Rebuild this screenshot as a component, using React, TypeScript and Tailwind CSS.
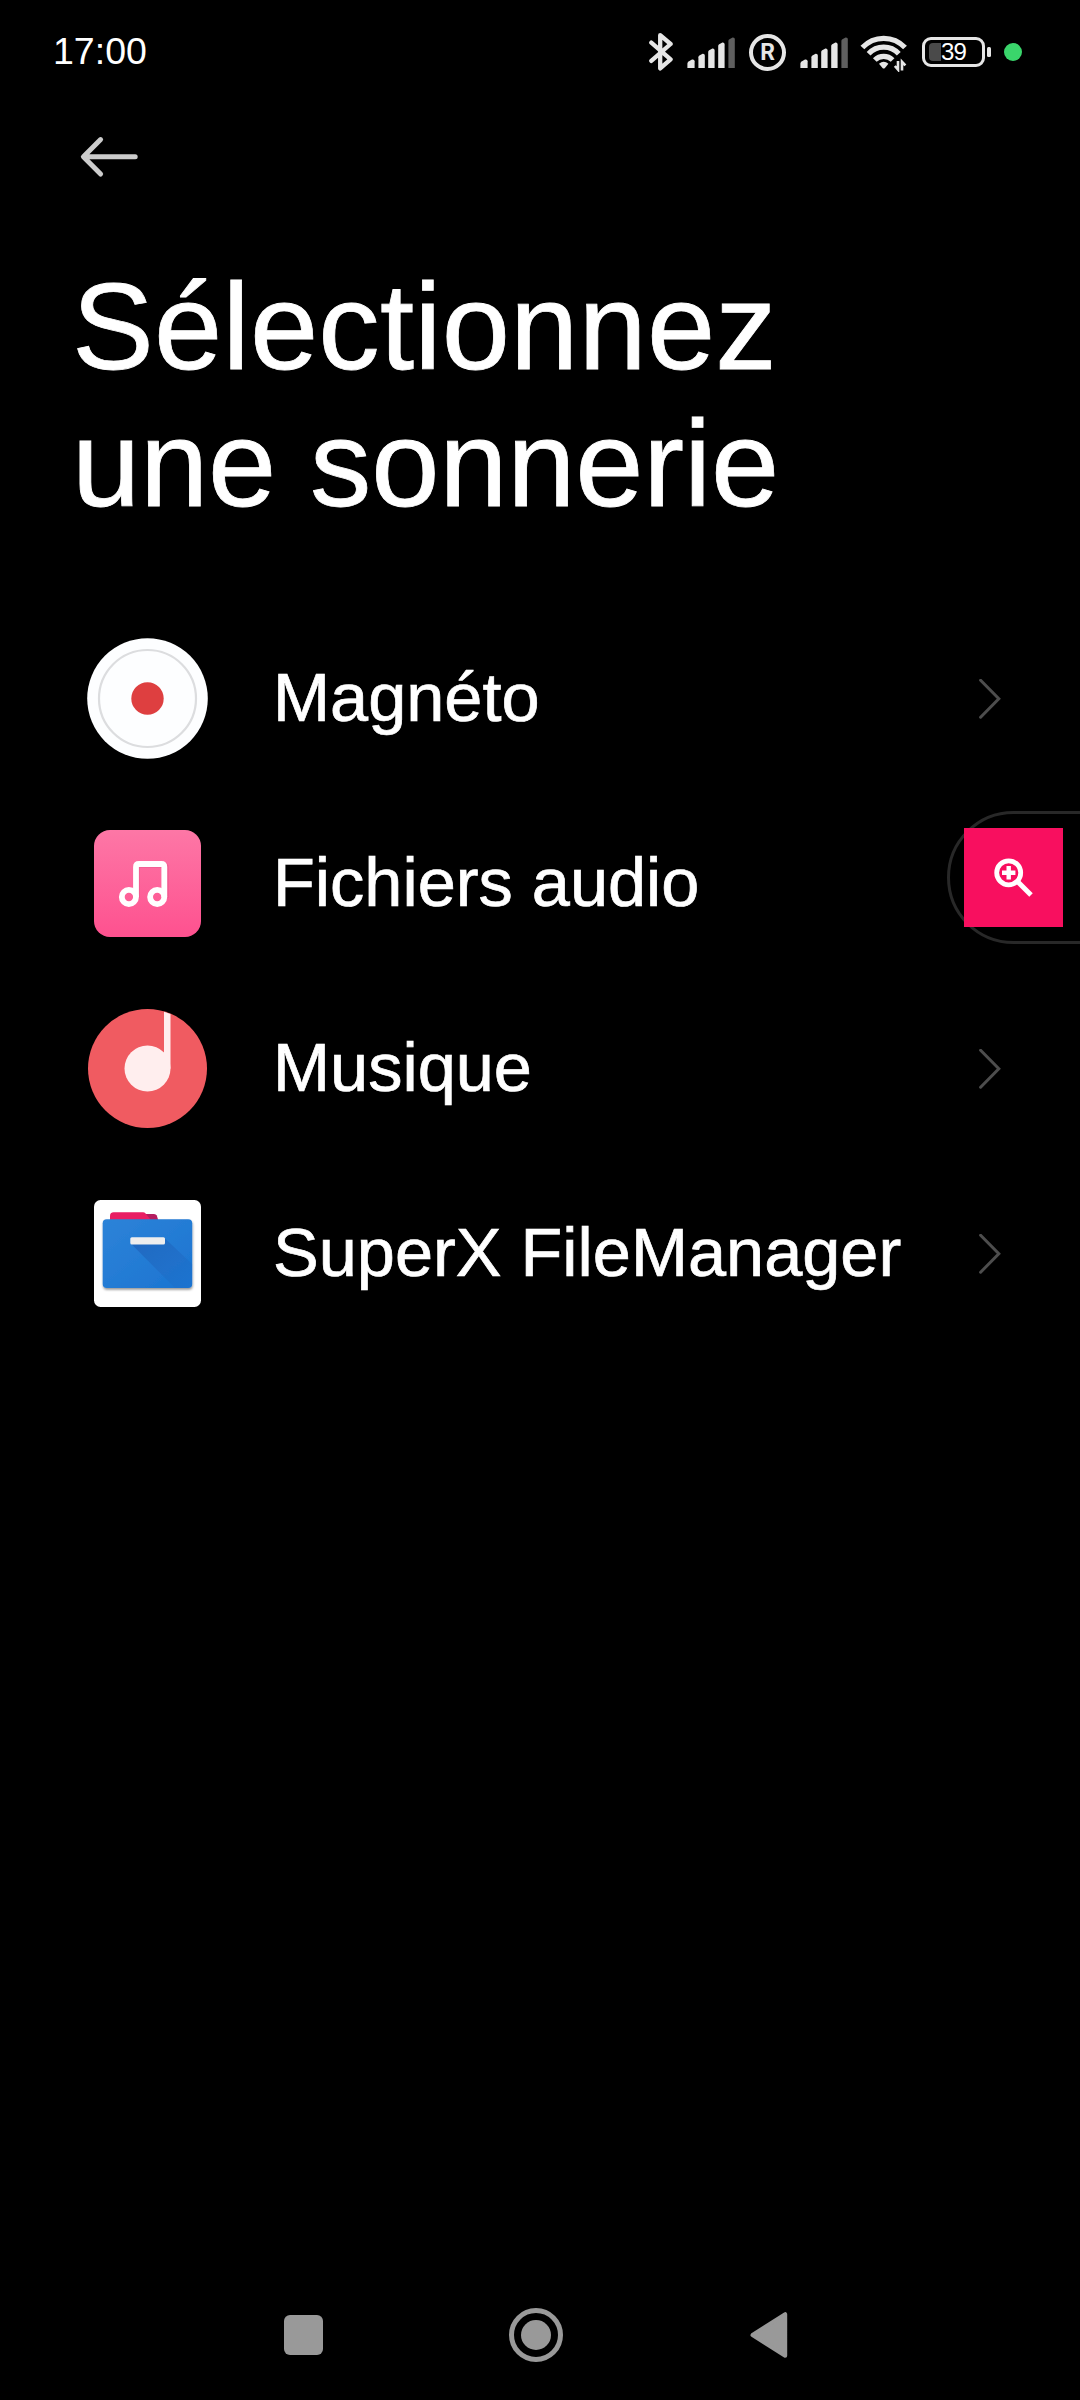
import type { ReactNode } from 'react';

function Signal() {
  return (
    <svg className="h-10 w-12" viewBox="0 0 48 40" fill="#e6e6e6">
      <path d="M0.4 36v-4.2q0-1.4 1.2-2.2l3.4-2q2.6-0.4 2.6 1.6V36z" />
      <path d="M11.4 36V25.2q0-1.2 1-1.8l3.2-1.6q2.2-0.2 2.2 1.6V36z" />
      <path d="M21.2 36V20q0-1.2 1-1.8l3.2-1.6q2.2-0.2 2.2 1.6V36z" />
      <path d="M31.2 36V14q0-1.2 1-1.8l3.2-1.6q2.2-0.2 2.2 1.6V36z" />
      <path d="M41.4 36V9q0-1.2 1-1.8l3.2-1.8q2.2-0.2 2.2 1.6V36z" fill="#5f5f5f" />
    </svg>
  );
}

function StatusBar() {
  return (
    <header className="flex h-[104px] items-center pl-[53px] pr-[58px]">
      <span className="grow text-[37.5px] leading-none">17:00</span>

      <svg className="h-10 w-6" viewBox="0 0 24 40" fill="none" stroke="#e6e6e6" strokeWidth="4.3" strokeLinecap="round" strokeLinejoin="round">
        <path d="M2.3 10.6L21.6 27.3L11.2 36.4V3.2L21.6 12L2.3 28.9" />
      </svg>
      <div className="ml-3.5"><Signal /></div>
      <div className="ml-3.5 flex size-[37px] items-center justify-center rounded-full border-4 border-[#e6e6e6] font-['Roboto',sans-serif] text-[23px] font-bold leading-none text-[#e6e6e6]">R</div>
      <div className="ml-3.5"><Signal /></div>

      <svg className="ml-3 h-10 w-12" viewBox="0 0 48 40" fill="none" stroke="#e6e6e6" strokeWidth="5.2">
        <path d="M2.4 15.6A29 29 0 0 1 45 15.6" />
        <path d="M8.6 21.8A20.5 20.5 0 0 1 38.8 21.8" />
        <path d="M14.8 28A12.6 12.6 0 0 1 32.6 28" />
        <path d="M19 31.8Q23.7 27.8 28.4 31.8L24.9 36Q23.7 37.2 22.5 36z" fill="#e6e6e6" stroke="none" />
        <path d="M38 29v8.6L34.8 34M42 38.4V29.8L45.4 33.4" strokeWidth="2.6" />
      </svg>

      <div className="ml-3.5 flex items-center">
        <div className="relative flex h-[30px] w-[63px] items-center justify-center rounded-[9px] border-[3px] border-[#e6e6e6]">
          <div className="absolute left-1 top-[3px] h-[18px] w-3 rounded-l-[4px] bg-[#4a4a4a]" />
          <span className="relative text-[24px] leading-none tracking-[-0.8px]">39</span>
        </div>
        <div className="ml-0.5 h-2.5 w-1 rounded-[1.5px] bg-[#e6e6e6]" />
      </div>
      <div className="ml-[13px] size-[18px] rounded-full bg-[#3ad56b]" />
    </header>
  );
}

function RecorderIcon() {
  return (
    <svg className="size-[121px]" viewBox="0 0 121 121">
      <circle cx="60.5" cy="60.5" r="60.3" fill="#fdfeff" />
      <circle cx="60.5" cy="60.5" r="48.5" fill="none" stroke="#dcdddf" strokeWidth="2.2" />
      <circle cx="60.5" cy="60.5" r="16.2" fill="#de3f40" />
    </svg>
  );
}

function AudioIcon() {
  return (
    <svg className="size-[107px]" viewBox="0 0 107 107">
      <defs>
        <linearGradient id="audio-bg" x1="0" y1="0" x2="0" y2="1">
          <stop offset="0" stopColor="#fd77a6" />
          <stop offset="1" stopColor="#fe518f" />
        </linearGradient>
      </defs>
      <rect width="107" height="107" rx="16" fill="url(#audio-bg)" />
      <g fill="none" strokeWidth="5.8">
        <path d="M43 68V38q0-3 3-3h23q3 0 3 3v30" stroke="#d93f78" strokeOpacity="0.25" />
        <g stroke="#fff">
          <path d="M42 67V37q0-3 3-3h22.3q3 0 3 3v30" />
          <circle cx="34.9" cy="67" r="7.1" />
          <circle cx="63.2" cy="67" r="7.1" />
        </g>
      </g>
    </svg>
  );
}

function MusicIcon() {
  return (
    <svg className="size-[119px]" viewBox="0 0 119 119">
      <circle cx="59.5" cy="59.5" r="59.5" fill="#f05b61" />
      <circle cx="59.5" cy="59.5" r="23" fill="#ffeeee" />
      <path d="M76 2.8L82.5 5V59.5H76z" fill="#ffeeee" />
    </svg>
  );
}

function FileManagerIcon() {
  return (
    <svg className="size-[107px]" viewBox="0 0 107 107">
      <defs>
        <linearGradient id="folder" x1="0" y1="0" x2="1" y2="1">
          <stop offset="0" stopColor="#2d83d8" />
          <stop offset="1" stopColor="#1b74d1" />
        </linearGradient>
        <linearGradient id="folder-shade" x1="0" y1="0" x2="1" y2="1">
          <stop offset="0" stopColor="#1e60b8" stopOpacity="0.75" />
          <stop offset="1" stopColor="#1e60b8" stopOpacity="0.05" />
        </linearGradient>
        <filter id="folder-shadow" x="-10%" y="-10%" width="120%" height="125%">
          <feDropShadow dx="0.5" dy="1.8" stdDeviation="1.2" floodColor="#000" floodOpacity="0.4" />
        </filter>
      </defs>
      <rect width="107" height="107" rx="6.5" fill="#fff" />
      <path d="M46 14h14q2 0 2.8 1.6L64.5 21H46z" fill="#b51d5f" />
      <path d="M16 21v-5q0-3.7 3.7-3.7H49q1.6 0 2.6 1.2L57.5 21z" fill="#e91e63" />
      <rect x="8.7" y="19.3" width="89.5" height="68.7" rx="4" fill="url(#folder)" filter="url(#folder-shadow)" />
      <path d="M37.3 44L71 38.5L98.2 64V84q0 4-4 4H81z" fill="url(#folder-shade)" />
      <rect x="36.3" y="37.3" width="34.7" height="7.2" rx="1.5" fill="#eee" />
    </svg>
  );
}

function Row({ icon, label }: { icon: ReactNode; label: string }) {
  return (
    <li className="flex h-[185px] items-center pl-[87px] pr-[78px]">
      <div className="flex w-[121px] justify-center">{icon}</div>
      <span className="ml-[65px] grow whitespace-nowrap text-[68.5px] leading-none [-webkit-text-stroke:0.7px_white]">{label}</span>
      <svg className="h-10 w-6" viewBox="0 0 24 40" fill="none" stroke="#4d4d4d" strokeWidth="3" strokeLinecap="round">
        <path d="M2.6 1.2L20.8 19.7L2.6 38.2" />
      </svg>
    </li>
  );
}

export default function App() {
  return (
    <div className="relative flex h-[2400px] w-[1080px] flex-col overflow-hidden bg-black font-['Liberation_Sans',Arial,sans-serif] text-white">
      <StatusBar />

      <div className="flex h-[106px] items-center pl-[78px]">
        <svg className="h-[44px] w-16" viewBox="0 0 64 44" fill="none" stroke="#ccc" strokeWidth="5" strokeLinecap="round" strokeLinejoin="round">
          <path d="M57.2 21.8H6M22.6 4.6L5.4 21.8L22.6 39" />
        </svg>
      </div>

      <h1 className="mt-12 pl-[72px] text-[122.7px] leading-[137px] [-webkit-text-stroke:0.8px_white]">
        <span className="tracking-[0.2px]">Sélectionnez</span>
        <br />
        <span className="tracking-[-0.2px]">une sonnerie</span>
      </h1>

      <ul className="mt-[74px]">
        <Row icon={<RecorderIcon />} label="Magnéto" />
        <Row icon={<AudioIcon />} label="Fichiers audio" />
        <Row icon={<MusicIcon />} label="Musique" />
        <Row icon={<FileManagerIcon />} label="SuperX FileManager" />
      </ul>

      {/* floating zoom handle docked to the right edge */}
      <div className="absolute left-[947px] top-[811px] flex h-[133px] w-[180px] items-center rounded-l-full border-[3px] border-[#282828] bg-black pl-3.5">
        <button type="button" className="flex size-[99px] items-center justify-center bg-[#f80f5f]">
          <svg className="size-[99px]" viewBox="0 0 99 99" fill="none" stroke="#fff">
            <circle cx="44.7" cy="44.8" r="12" strokeWidth="4.8" />
            <path d="M53 53L67 67" strokeWidth="5" />
            <path d="M38 44.8h13.4M44.7 38v13.6" strokeWidth="4.4" />
          </svg>
        </button>
      </div>

      <nav className="mt-auto flex h-[130px] items-center pl-[284px]">
        <div className="h-10 w-[39px] rounded-[6px] bg-[#999]" />
        <div className="ml-[186px] flex size-[54px] items-center justify-center rounded-full border-[5px] border-[#999]">
          <div className="size-[30px] rounded-full bg-[#999]" />
        </div>
        <svg className="ml-[187px] h-[46px] w-[38px]" viewBox="0 0 38 46" fill="#999" stroke="#999" strokeWidth="4" strokeLinejoin="round">
          <path d="M2.5 23L35.2 2.2V43.8z" />
        </svg>
      </nav>
    </div>
  );
}
